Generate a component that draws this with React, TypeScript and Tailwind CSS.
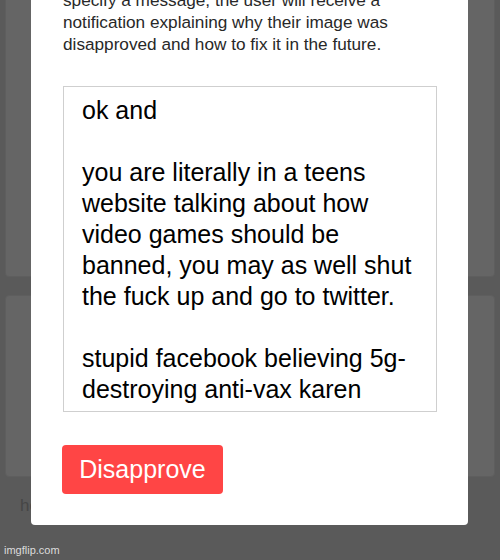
import React from "react";

const message = `ok and

you are literally in a teens website talking about how video games should be banned, you may as well shut the fuck up and go to twitter.

stupid facebook believing 5g-destroying anti-vax karen`;

const App = () => {
  return (
    <div className="relative w-[500px] h-[560px] overflow-hidden bg-[#5a5a5a] font-['Liberation_Sans',Arial,sans-serif]">
      {/* page behind the overlay */}
      <div className="flex flex-col px-[5px]">
        <div className="h-[277px] rounded-b-[4px] border border-t-0 border-[#5e5e5e] bg-[#656565]" />
        <div className="mt-[18px] h-[182px] rounded-[4px] border border-[#5e5e5e] bg-[#656565]" />
        <p className="mt-[18px] pl-[15px] text-[17px] leading-[22px] text-[#464646]">how it works</p>
      </div>

      <div className="absolute left-[4px] bottom-[2px] text-[11px] leading-[16px] text-[#dcdcdc]">imgflip.com</div>

      {/* modal */}
      <div className="absolute left-[31px] top-0 flex h-[525px] w-[437px] flex-col rounded-b-[4px] bg-white pl-[32px] pr-[31px]">
        <p className="-mt-[11px] text-[17.2px] leading-[22px] text-[#282828]">
          specify a message, the user will receive a
          <br />
          notification explaining why their image was
          <br />
          disapproved and how to fix it in the future.
        </p>
        <div className="mt-[31px] h-[326px] whitespace-pre-wrap border border-[#cfcfcf] px-[18px] pt-[8px] text-[25px] leading-[31px] text-black">
          {message}
        </div>
        <button className="mt-[33px] -ml-px flex h-[49px] w-[161px] items-center justify-center rounded-[4px] bg-[#ff4545] text-[25px] text-white">
          Disapprove
        </button>
      </div>
    </div>
  );
};

export default App;
